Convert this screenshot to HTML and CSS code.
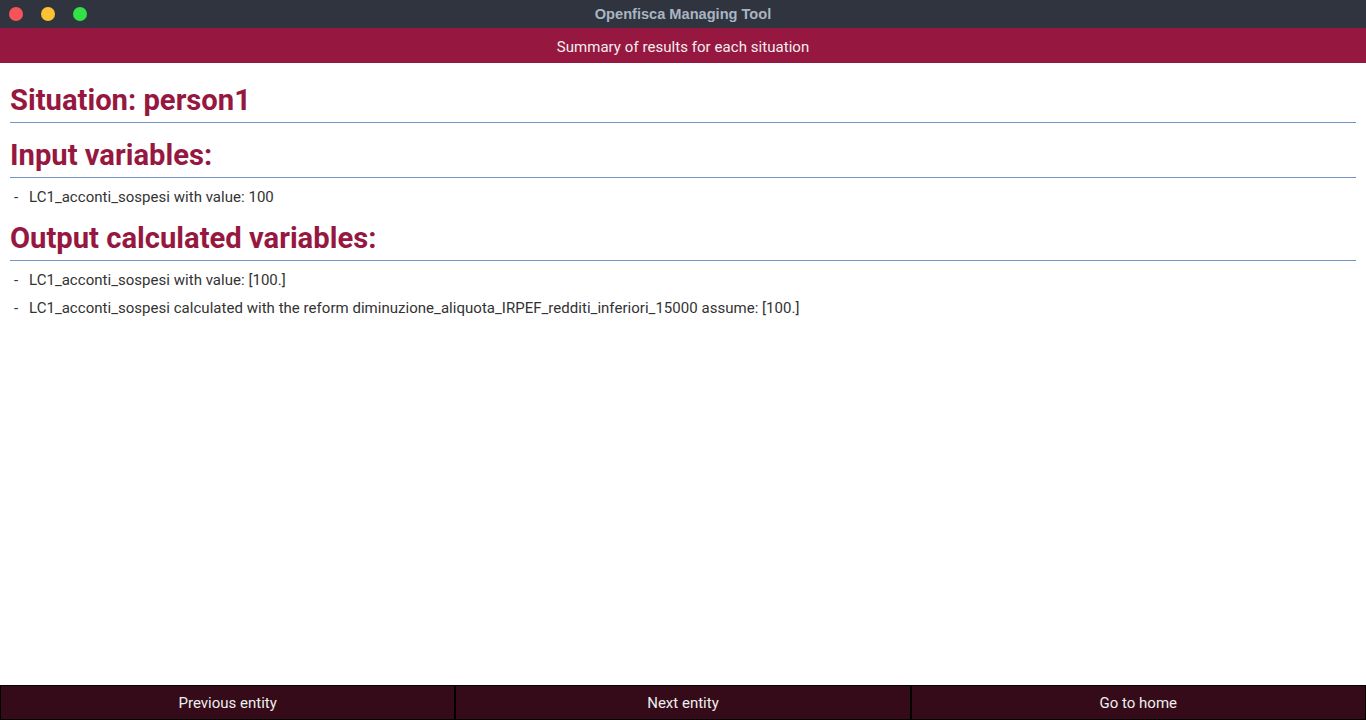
FILE: index.html
```html
<!DOCTYPE html>
<html>
<head>
<meta charset="utf-8">
<link rel="stylesheet" href="styles.css">
</head>
<body>
<div class="window">
  <header class="titlebar">
    <div class="lights">
      <span class="light red"></span>
      <span class="light yellow"></span>
      <span class="light green"></span>
    </div>
    <div class="title">Openfisca Managing Tool</div>
  </header>
  <div class="banner">Summary of results for each situation</div>
  <main class="content">
    <h2 class="heading">Situation: person1</h2>
    <h2 class="heading">Input variables:</h2>
    <ul class="items">
      <li>LC1_acconti_sospesi with value: 100</li>
    </ul>
    <h2 class="heading">Output calculated variables:</h2>
    <ul class="items">
      <li>LC1_acconti_sospesi with value: [100.]</li>
      <li>LC1_acconti_sospesi calculated with the reform diminuzione_aliquota_IRPEF_redditi_inferiori_15000 assume: [100.]</li>
    </ul>
  </main>
  <footer class="buttons">
    <button class="btn">Previous entity</button>
    <button class="btn">Next entity</button>
    <button class="btn">Go to home</button>
  </footer>
</div>
</body>
</html>
```

FILE: styles.css
```css
* { box-sizing: border-box; }
html, body { margin: 0; padding: 0; }
body {
  width: 1366px;
  height: 720px;
  overflow: hidden;
  font-family: Roboto, "Liberation Sans", sans-serif;
  background: #fff;
}
.window {
  display: flex;
  flex-direction: column;
  height: 720px;
}
.titlebar {
  height: 28px;
  background: #2f343f;
  display: flex;
  align-items: center;
  position: relative;
}
.lights {
  display: flex;
  gap: 18px;
  padding-left: 9px;
}
.light {
  width: 14px;
  height: 14px;
  border-radius: 50%;
  display: block;
}
.red { background: #f7545a; }
.yellow { background: #fdc233; }
.green { background: #33e046; }
.title {
  position: absolute;
  left: 0;
  right: 0;
  top: 0;
  line-height: 28px;
  text-align: center;
  font-family: "Liberation Sans", sans-serif;
  font-weight: bold;
  font-size: 14.6px;
  color: #a9b4c2;
  pointer-events: none;
}
.banner {
  height: 35px;
  background: #961840;
  color: #f4eef0;
  font-size: 15px;
  line-height: 35px;
  padding-top: 2px;
  overflow: hidden;
  text-align: center;
  letter-spacing: 0.05px;
}
.content {
  flex: 1;
  padding: 18px 10px 0 10px;
}
.heading {
  margin: 0;
  font-size: 29.2px;
  font-weight: bold;
  color: #961840;
  line-height: 38px;
  padding-bottom: 3px;
  border-bottom: 1px solid #7693c9;
  margin-bottom: 13px;
}
.items {
  list-style: none;
  margin: -8px 0 8px 0;
  padding: 0;
}
.items li {
  font-size: 15px;
  color: #333;
  line-height: 28px;
  padding-left: 19px;
  position: relative;
  letter-spacing: 0.03px;
}
.items li::before {
  content: "-";
  position: absolute;
  left: 4px;
}
.buttons {
  display: flex;
  height: 35px;
  background: #000;
}
.btn {
  flex: 1;
  margin: 0;
  border: 1px solid #000;
  background: #350a19;
  color: #eee;
  font-family: Roboto, "Liberation Sans", sans-serif;
  font-size: 15px;
  padding: 0;
}
```
